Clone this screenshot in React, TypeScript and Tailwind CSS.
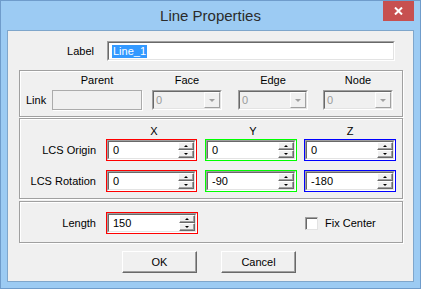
import React from "react";

const font = { fontFamily: '"Liberation Sans", Arial, sans-serif' };

function SpinBtn({ up }: { up?: boolean }) {
  return (
    <div className="flex-1 flex items-center justify-center bg-[#f0f0f0] border border-t-white border-l-white border-b-[#696969] border-r-[#696969] shadow-[inset_-1px_-1px_0_#a0a0a0]">
      {up ? (
        <div className="w-0 h-0 border-x-[2px] border-x-transparent border-b-[2px] border-b-black" />
      ) : (
        <div className="w-0 h-0 border-x-[2px] border-x-transparent border-t-[2px] border-t-black" />
      )}
    </div>
  );
}

function SpinBox({ value, color, w }: { value: string; color: string; w: string }) {
  return (
    <div className={`${w} h-[22px] border ${color} flex`}>
      <div className="flex-1 flex border border-t-[#a0a0a0] border-l-[#a0a0a0] border-b-white border-r-white">
        <div className="flex-1 flex bg-white border border-t-[#696969] border-l-[#696969] border-b-[#e3e3e3] border-r-[#e3e3e3]">
          <div className="flex-1 pl-[4px] flex items-center text-[11px] text-black leading-none">{value}</div>
          <div className="w-[16px] flex flex-col">
            <SpinBtn up />
            <SpinBtn />
          </div>
        </div>
      </div>
    </div>
  );
}

function Combo() {
  return (
    <div className="w-[70px] h-[20px] flex border border-t-[#a0a0a0] border-l-[#a0a0a0] border-b-white border-r-white">
      <div className="flex-1 flex bg-[#f0f0f0] border border-t-[#696969] border-l-[#696969] border-b-[#e3e3e3] border-r-[#e3e3e3]">
        <div className="flex-1 pl-[2px] flex items-center text-[11px] text-[#9a9a9a] leading-none">0</div>
        <div className="w-[16px] flex items-center justify-center bg-[#f0f0f0] border border-t-white border-l-white border-b-[#a0a0a0] border-r-[#a0a0a0]">
          <div className="w-0 h-0 border-x-[3px] border-x-transparent border-t-[3px] border-t-[#a0a0a0]" />
        </div>
      </div>
    </div>
  );
}

function Group({ className, children }: { className: string; children: React.ReactNode }) {
  return (
    <div className={`ml-[11px] w-[384px] border border-[#a0a0a0] shadow-[inset_1px_1px_0_#ffffff,1px_1px_0_#ffffff] ${className}`}>
      {children}
    </div>
  );
}

function Btn({ label }: { label: string }) {
  return (
    <div className="w-[75px] h-[22px] flex items-center justify-center bg-[#f0f0f0] border border-t-white border-l-white border-b-[#696969] border-r-[#696969] shadow-[inset_-1px_-1px_0_#a0a0a0] text-[11px] text-black">
      {label}
    </div>
  );
}

export default function App() {
  return (
    <div style={font} className="w-[421px] h-[289px] bg-[#9ccbf3] border border-[#6f9ccb] px-[6px] pb-[6px] flex flex-col text-black">
      <div className="relative h-[29px] flex items-center justify-center">
        <span className="text-[15px] text-[#2b2b2b] pt-[1px]" style={{ fontFamily: '"Liberation Sans", Arial, sans-serif' }}>Line Properties</span>
        <div className="absolute right-[0px] top-0 w-[31px] h-[20px] bg-[#c75050] flex items-center justify-center">
          <svg width="9" height="8" viewBox="0 0 9 8">
            <path d="M1 0.5 L8 7.5 M8 0.5 L1 7.5" stroke="white" strokeWidth="2" />
          </svg>
        </div>
      </div>
      <div className="flex-1 bg-[#f0f0f0] border border-[#7fa6cb] flex flex-col text-[11px]">
        {/* Label row */}
        <div className="mt-[10px] flex items-center h-[20px]">
          <div className="w-[86px] text-right">Label</div>
          <div className="ml-[13px] w-[288px] h-[20px] flex border border-t-[#a0a0a0] border-l-[#a0a0a0] border-b-white border-r-white">
            <div className="flex-1 flex items-center bg-white border border-t-[#696969] border-l-[#696969] border-b-[#e3e3e3] border-r-[#e3e3e3] pl-[3px]">
              <span className="bg-[#3399ff] text-white leading-[13px] px-[1px]">Line_1</span>
            </div>
          </div>
        </div>

        {/* Link group */}
        <Group className="mt-[9px] h-[47px] flex items-end pb-[6px]">
          <div className="w-[6px]" />
          <div className="w-[26px] h-[20px] flex items-center">Link</div>
          <div className="flex flex-col items-center">
            <div className="leading-[13px] mb-[3px]">Parent</div>
            <div className="w-[90px] h-[20px] bg-[#f0f0f0] border border-[#ababab] shadow-[1px_1px_0_#ffffff]" />
          </div>
          <div className="ml-[10px] flex flex-col items-center">
            <div className="leading-[13px] mb-[3px]">Face</div>
            <Combo />
          </div>
          <div className="ml-[16px] flex flex-col items-center">
            <div className="leading-[13px] mb-[3px]">Edge</div>
            <Combo />
          </div>
          <div className="ml-[15px] flex flex-col items-center">
            <div className="leading-[13px] mb-[3px]">Node</div>
            <Combo />
          </div>
        </Group>

        {/* LCS group */}
        <Group className="mt-[1px] h-[81px] flex flex-col">
          <div className="mt-[6px] flex h-[13px] leading-[13px]">
            <div className="w-[86px]" />
            <div className="w-[91px] text-center pl-[5px]">X</div>
            <div className="ml-[8px] w-[92px] text-center pl-[4px]">Y</div>
            <div className="ml-[7px] w-[92px] text-center">Z</div>
          </div>
          <div className="mt-[1px] flex items-center">
            <div className="w-[76px] text-right">LCS Origin</div>
            <div className="ml-[10px]"><SpinBox value="0" color="border-[#ff0000]" w="w-[91px]" /></div>
            <div className="ml-[8px]"><SpinBox value="0" color="border-[#00ff00]" w="w-[92px]" /></div>
            <div className="ml-[7px]"><SpinBox value="0" color="border-[#0000ff]" w="w-[92px]" /></div>
          </div>
          <div className="mt-[9px] flex items-center">
            <div className="w-[76px] text-right">LCS Rotation</div>
            <div className="ml-[10px]"><SpinBox value="0" color="border-[#ff0000]" w="w-[91px]" /></div>
            <div className="ml-[8px]"><SpinBox value="-90" color="border-[#00ff00]" w="w-[92px]" /></div>
            <div className="ml-[7px]"><SpinBox value="-180" color="border-[#0000ff]" w="w-[92px]" /></div>
          </div>
        </Group>

        {/* Length group */}
        <Group className="mt-[2px] h-[42px] flex items-start">
          <div className="mt-[10px] flex items-center">
            <div className="w-[76px] text-right">Length</div>
            <div className="ml-[10px]"><SpinBox value="150" color="border-[#ff0000]" w="w-[92px]" /></div>
            <div className="ml-[107px] w-[13px] h-[13px] bg-white border border-t-[#a0a0a0] border-l-[#a0a0a0] border-b-[#e3e3e3] border-r-[#e3e3e3] shadow-[inset_1px_1px_0_#696969]" />
            <div className="ml-[7px]">Fix Center</div>
          </div>
        </Group>

        {/* Buttons */}
        <div className="mt-[8px] ml-[114px] flex gap-[24px]">
          <Btn label="OK" />
          <Btn label="Cancel" />
        </div>
      </div>
    </div>
  );
}
